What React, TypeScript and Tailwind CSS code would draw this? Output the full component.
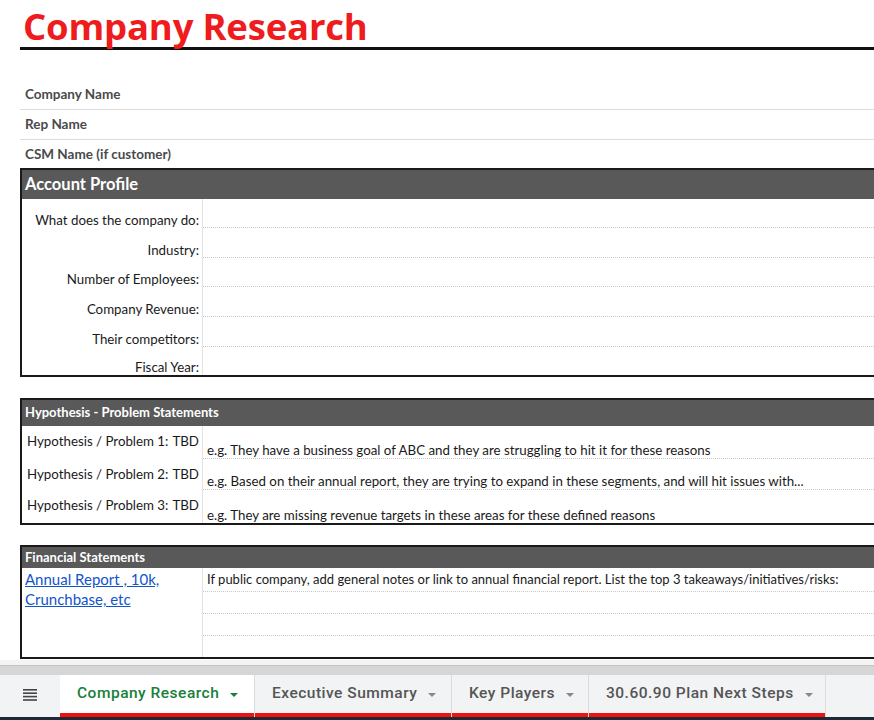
import React from 'react';

const sans = { fontFamily: 'Lato, "Noto Sans", sans-serif' };

const profileRows = [
  'What does the company do:',
  'Industry:',
  'Number of Employees:',
  'Company Revenue:',
  'Their competitors:',
  'Fiscal Year:',
];

const profileHeights = ['h-[29px]', 'h-[30px]', 'h-[29px]', 'h-[30px]', 'h-[30px]', 'h-[28px]'];

const hypotheses = [
  { label: 'Hypothesis / Problem 1:', text: 'e.g. They have a business goal of ABC and they are struggling to hit it for these reasons', h: 'h-[33px]' },
  { label: 'Hypothesis / Problem 2:', text: 'e.g. Based on their annual report, they are trying to expand in these segments, and will hit issues with...', h: 'h-[31px]' },
  { label: 'Hypothesis / Problem 3:', text: 'e.g. They are missing revenue targets in these areas for these defined reasons', h: 'h-[33px]' },
];

const tabs = [
  { name: 'Company Research', w: 'w-[195px]', active: true },
  { name: 'Executive Summary', w: 'w-[197px]' },
  { name: 'Key Players', w: 'w-[137px]' },
  { name: '30.60.90 Plan Next Steps', w: 'w-[237px]' },
];

const Caret = ({ color }: { color: string }) => (
  <svg width="8" height="4" viewBox="0 0 8 4" className="ml-[11px] mt-[1px]">
    <path d="M0 0 L8 0 L4 4 Z" fill={color} />
  </svg>
);

const SectionHeader = ({ title, h, size }: { title: string; h: string; size: string }) => (
  <div className={`${h} bg-[#595959] flex items-center pl-[3px] text-white font-bold ${size}`}>{title}</div>
);

export default function App() {
  return (
    <div className="w-[874px] h-[720px] overflow-hidden bg-white flex flex-col" style={sans}>
      <div className="flex-1 overflow-hidden">
        <div className="w-[1100px] pl-[20px]">
          {/* title */}
          <div
            className="h-[47px] flex items-end pl-[3px] text-[36.5px] font-bold text-[#ee1c1c] leading-none pb-[3px] tracking-[-0.2px]"
            style={{ fontFamily: '"Open Sans", Lato, sans-serif' }}
          >
            Company Research
          </div>
          <div className="h-[3px] bg-[#111]" />
          <div className="h-[30px]" />

          {/* name rows */}
          {['Company Name', 'Rep Name', 'CSM Name (if customer)'].map((n, i) => (
            <div
              key={n}
              className={`${i < 2 ? 'h-[30px] border-b border-[#dcdcdc]' : 'h-[28px]'} flex items-center pl-[5px] text-[13.5px] font-bold text-[#4a4a4a]`}
            >
              {n}
            </div>
          ))}

          {/* account profile */}
          <div className="border-2 border-[#1a1a1a] border-r-0">
            <SectionHeader title="Account Profile" h="h-[29px]" size="text-[16.5px]" />
            <div className="flex">
              <div className="w-[181px] border-r border-[#e3e3e3]">
                {profileRows.map((r, i) => (
                  <div key={r} className={`${profileHeights[i]} flex items-end justify-end pr-[3px] pb-[1px] text-[13.3px] leading-[14px] text-[#1a1a1a] whitespace-nowrap`}>
                    {r}
                  </div>
                ))}
              </div>
              <div className="flex-1">
                {profileRows.map((r, i) => (
                  <div
                    key={r}
                    className={`${profileHeights[i]} ${i < 5 ? 'border-b border-dotted border-[#c8c8c8]' : ''}`}
                  />
                ))}
              </div>
            </div>
          </div>

          <div className="h-[21px]" />

          {/* hypothesis */}
          <div className="border-2 border-[#1a1a1a] border-r-0">
            <SectionHeader title="Hypothesis - Problem Statements" h="h-[26px]" size="text-[13px]" />
            {hypotheses.map((hy, i) => (
              <div key={hy.label} className={`${hy.h} flex`}>
                <div className="w-[181px] border-r border-[#e3e3e3] flex items-start pt-[8px] pl-[5px] text-[13.3px] leading-[14px] text-[#1a1a1a] whitespace-nowrap">
                  {hy.label}
                  <span className="ml-[4px]">TBD</span>
                </div>
                <div
                  className={`flex-1 flex items-end pl-[4px] pb-[1px] text-[13.3px] leading-[14px] text-[#1a1a1a] whitespace-nowrap ${i < 2 ? 'border-b border-dotted border-[#c8c8c8]' : ''}`}
                >
                  {hy.text}
                </div>
              </div>
            ))}
          </div>

          <div className="h-[20px]" />

          {/* financial */}
          <div className="border-2 border-[#1a1a1a] border-r-0">
            <SectionHeader title="Financial Statements" h="h-[21px]" size="text-[13px]" />
            <div className="flex">
              <div className="w-[181px] border-r border-[#e3e3e3] pl-[3px] pt-[1px] text-[15px] leading-[20px] text-[#1155cc] underline">
                Annual Report , 10k,
                <br />
                Crunchbase, etc
              </div>
              <div className="flex-1">
                <div className="h-[24px] flex items-center pl-[4px] pt-[1px] text-[13px] text-[#1a1a1a] whitespace-nowrap border-b border-dotted border-[#c8c8c8]">
                  If public company, add general notes or link to annual financial report. List the top 3 takeaways/initiatives/risks:
                </div>
                <div className="h-[22px] border-b border-dotted border-[#c8c8c8]" />
                <div className="h-[22px] border-b border-dotted border-[#c8c8c8]" />
                <div className="h-[21px]" />
              </div>
            </div>
          </div>
        </div>
      </div>

      {/* sheet tabs */}
      <div className="shrink-0" style={{ fontFamily: 'Roboto, "Noto Sans", sans-serif' }}>
        <div className="h-[5px] bg-[#f4f4f4]" />
        <div className="h-[10px] bg-[#d6d6d6] border-t border-[#c4c4c4]" />
        <div className="h-[42px] bg-[#f1f3f4] flex">
          <div className="w-[60px] flex items-center justify-center pb-[2px]">
            <svg width="14" height="12" viewBox="0 0 14 12">
              <rect x="0" y="0" width="14" height="1.6" fill="#444" />
              <rect x="0" y="3.4" width="14" height="1.6" fill="#444" />
              <rect x="0" y="6.8" width="14" height="1.6" fill="#444" />
              <rect x="0" y="10.2" width="14" height="1.6" fill="#444" />
            </svg>
          </div>
          {tabs.map((t) => (
            <div key={t.name} className={`${t.w} flex flex-col border-r border-[#dadce0] ${t.active ? 'bg-white' : ''}`}>
              <div
                className={`flex-1 flex items-center pl-[17px] text-[15.5px] font-medium tracking-[0.5px] ${t.active ? 'text-[#188038]' : 'text-[#555]'}`}
              >
                {t.name}
                <Caret color={t.active ? '#188038' : '#888'} />
              </div>
              <div className="h-[4px] bg-[#ee1111]" />
            </div>
          ))}
        </div>
        <div className="h-[3px] bg-[#1d2a36]" />
      </div>
    </div>
  );
}
